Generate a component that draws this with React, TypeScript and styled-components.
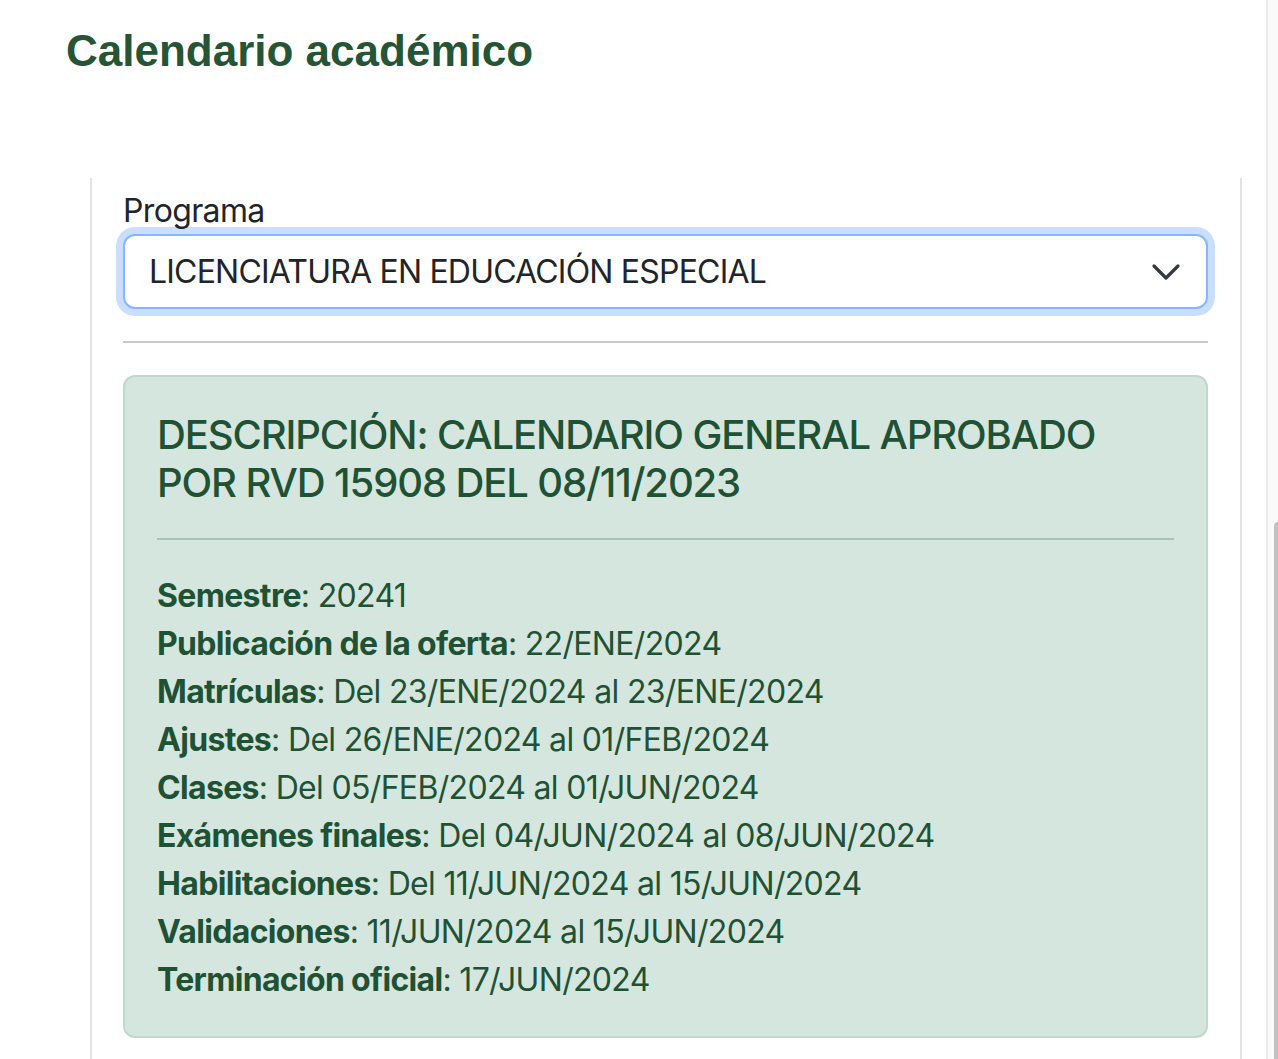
import React from "react";
import styled, { createGlobalStyle } from "styled-components";

const GlobalStyle = createGlobalStyle`
  html, body { margin: 0; padding: 0; background: #ffffff; }
  body { font-family: Inter, "Noto Sans", "DejaVu Sans", sans-serif; color: #212529; overflow: hidden; }
  * { box-sizing: border-box; }
`;

const Page = styled.div`
  display: flex;
  width: 1278px;
  height: 1059px;
  overflow: hidden;
`;

const Main = styled.div`
  flex: 0 0 1266px;
  display: flex;
  flex-direction: column;
`;

const Title = styled.h1`
  margin: 25px 0 0 66px;
  font-family: "Liberation Sans", Arial, sans-serif;
  font-weight: 700;
  font-size: 44px;
  line-height: 51px;
  color: #265535;
`;

const Panel = styled.section`
  margin: 102px 24px 0 90px;
  flex: 1;
  border-left: 2px solid #e1e3e5;
  border-right: 2px solid #e1e3e5;
  padding: 8px 32px 0 31px;
`;

const Label = styled.label`
  display: block;
  padding-top: 1px;
  margin-bottom: -1px;
  font-size: 32px;
  line-height: 48px;
  letter-spacing: -0.02em;
  color: #212529;
`;

const SelectBox = styled.div`
  display: flex;
  align-items: center;
  justify-content: space-between;
  height: 75px;
  padding: 0 24px 0 24px;
  border: 2px solid #86b7fe;
  border-radius: 12px;
  box-shadow: 0 0 0 7px rgba(13, 110, 253, 0.22);
  font-size: 32px;
  letter-spacing: -0.025em;
  color: #212529;
  background: #fff;
`;

const Rule = styled.hr<{ $color: string; $top?: number }>`
  margin: ${(p) => p.$top ?? 32}px 0 32px;
  border: 0;
  border-top: 2px solid ${(p) => p.$color};
`;

const Alert = styled.div`
  background: #d5e6de;
  border: 2px solid #bcdbcc;
  border-radius: 12px;
  padding: 32px 32px 32px 32px;
  color: #1f5234;
`;

const AlertHeading = styled.h5`
  margin: 0;
  padding-top: 2px;
  font-size: 40px;
  line-height: 48px;
  font-weight: 500;
  letter-spacing: -0.028em;
`;

const InfoList = styled.div`
  font-size: 32px;
  line-height: 48px;
  letter-spacing: -0.021em;
`;

const InfoLine = styled.div``;

const Key = styled.strong`
  font-weight: 700;
`;

const ScrollTrack = styled.div`
  flex: 0 0 12px;
  background: #fafafa;
  border-left: 2px solid #ebebeb;
  padding: 522px 0 0 6px;
  display: flex;
`;

const ScrollThumb = styled.div`
  flex: 1;
  background: #c1c1c1;
  border-radius: 6px 0 0 0;
`;

const rows: [string, string][] = [
  ["Semestre", "20241"],
  ["Publicación de la oferta", "22/ENE/2024"],
  ["Matrículas", "Del 23/ENE/2024 al 23/ENE/2024"],
  ["Ajustes", "Del 26/ENE/2024 al 01/FEB/2024"],
  ["Clases", "Del 05/FEB/2024 al 01/JUN/2024"],
  ["Exámenes finales", "Del 04/JUN/2024 al 08/JUN/2024"],
  ["Habilitaciones", "Del 11/JUN/2024 al 15/JUN/2024"],
  ["Validaciones", "11/JUN/2024 al 15/JUN/2024"],
  ["Terminación oficial", "17/JUN/2024"],
];

const Chevron = () => (
  <svg width="32" height="24" viewBox="0 0 16 12" fill="none">
    <path d="M2 3l6 6 6-6" stroke="#343a40" strokeWidth="1.6" strokeLinecap="round" strokeLinejoin="round" />
  </svg>
);

export default function App() {
  return (
    <>
      <GlobalStyle />
      <Page>
        <Main>
          <Title>Calendario académico</Title>
          <Panel>
            <Label>Programa</Label>
            <SelectBox>
              <span>LICENCIATURA EN EDUCACIÓN ESPECIAL</span>
              <Chevron />
            </SelectBox>
            <Rule $color="#c8c9ca" />
            <Alert>
              <AlertHeading>
                DESCRIPCIÓN: CALENDARIO GENERAL APROBADO POR RVD 15908 DEL 08/11/2023
              </AlertHeading>
              <Rule $color="#a8c4b5" $top={31} />
              <InfoList>
                {rows.map(([k, v]) => (
                  <InfoLine key={k}>
                    <Key>{k}</Key>: {v}
                  </InfoLine>
                ))}
              </InfoList>
            </Alert>
          </Panel>
        </Main>
        <ScrollTrack>
          <ScrollThumb />
        </ScrollTrack>
      </Page>
    </>
  );
}
